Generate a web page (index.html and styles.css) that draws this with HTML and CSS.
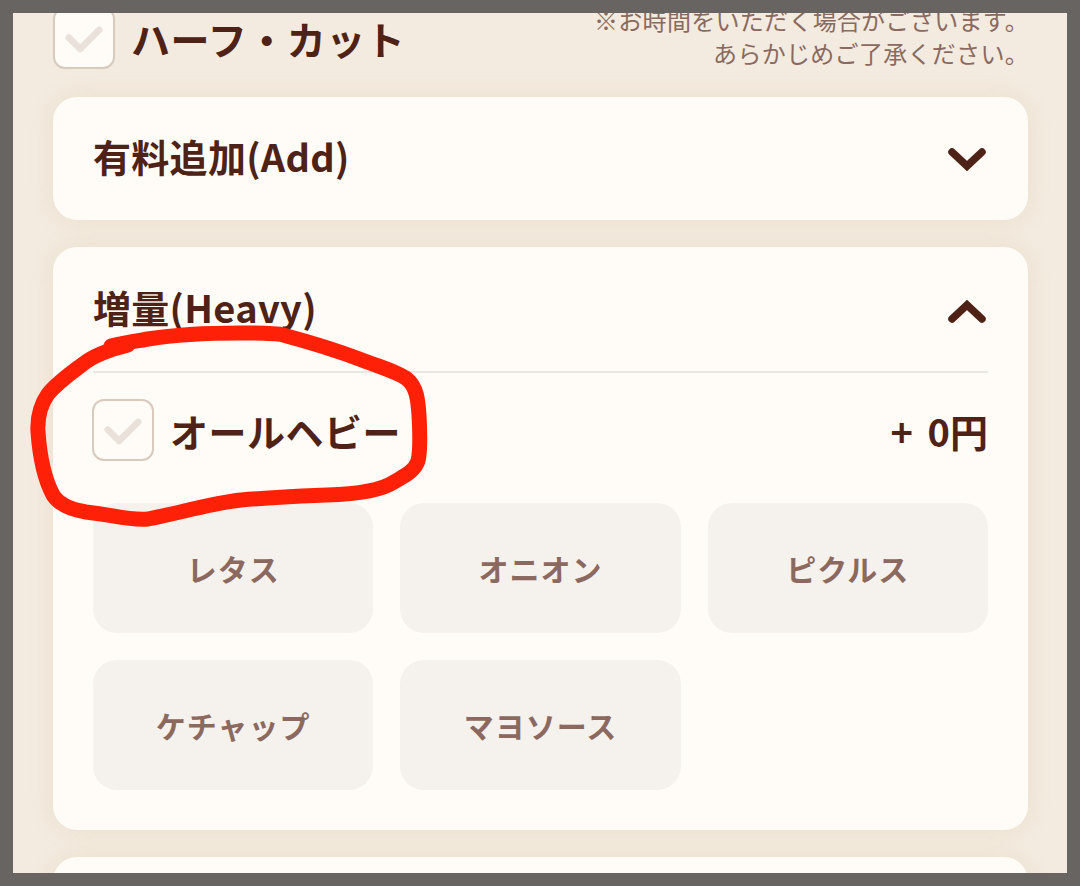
FILE: index.html
```html
<!DOCTYPE html>
<html lang="ja">
<head>
  <meta charset="UTF-8">
  <meta name="viewport" content="width=device-width, initial-scale=1.0">
  <title>トッピング</title>
  <link rel="stylesheet" href="styles.css">
</head>
<body>
  <div class="screen">
    <div class="page">

      <div class="top_row">
        <label class="check_line">
          <span class="checkbox">
            <svg viewBox="0 0 61 61"><path d="M14.5 30 L26.5 42 L46.5 22"/></svg>
          </span>
          <span class="check_label big">ハーフ・カット</span>
        </label>
        <p class="note">※お時間をいただく場合がございます。<br>あらかじめご了承ください。</p>
      </div>

      <section class="card">
        <div class="card_head">
          <h2>有料追加(Add)</h2>
          <svg class="chevron" viewBox="0 0 44 28"><path d="M7 7 L22 21 L37 7"/></svg>
        </div>
      </section>

      <section class="card open">
        <div class="card_head">
          <h2>増量(Heavy)</h2>
          <svg class="chevron" viewBox="0 0 44 28"><path d="M7 21 L22 7 L37 21"/></svg>
        </div>
        <div class="card_body">
          <div class="option_row">
            <label class="check_line">
              <span class="checkbox">
                <svg viewBox="0 0 61 61"><path d="M14.5 30 L26.5 42 L46.5 22"/></svg>
              </span>
              <span class="check_label">オールヘビー</span>
            </label>
            <span class="price">+ 0円</span>
          </div>
          <ul class="chips">
            <li>レタス</li>
            <li>オニオン</li>
            <li>ピクルス</li>
            <li>ケチャップ</li>
            <li>マヨソース</li>
          </ul>
        </div>
      </section>

      <section class="card">
        <div class="card_head">
          <h2>&nbsp;</h2>
        </div>
      </section>

    </div>

    <!-- hand drawn red mark -->
    <svg class="scribble" viewBox="0 0 1054 860">
      <path d="M98 333 C 110 330 124 328 135 326 C 160 322 200 320 228 320 C 250 320 262 320 270 322 C 300 330 320 336 349 347 C 370 355 385 359 394 366 C 404 374 405 388 406 402 C 407 420 407 440 405 448 C 401 459 391 463 381 469 C 369 477 346 481 314 482 C 290 483 262 484 228 487 C 200 490 170 499 135 506 C 118 508 100 502 73 499 C 55 496 45 490 40 482 C 32 467 27 447 25 419 C 24 402 28 391 35 381 C 45 369 58 360 70 351 C 80 343 95 337 115 332"/>
    </svg>
  </div>
</body>
</html>
```

FILE: styles.css
```css
* {
  margin: 0;
  padding: 0;
  box-sizing: border-box;
  list-style-type: none;
}

html {
  font-family: "Noto Sans CJK JP", "Noto Sans", sans-serif;
}

body {
  background-color: #686462;
  padding: 13px;
  height: 886px;
}

.screen {
  position: relative;
  height: 860px;
  overflow: hidden;
  background-color: #f3ebdf;
}

.page {
  display: flex;
  flex-direction: column;
  gap: 27px;
  padding: 0 39px 0 40px;
  margin-top: -6px;
}

/* top line (previous card, cut off) */
.top_row {
  display: flex;
  justify-content: space-between;
  align-items: center;
  height: 62px;
  margin-bottom: 1px;
}

.note {
  font-size: 24px;
  line-height: 33px;
  color: #8a6a60;
  text-align: right;
  margin-right: -1px;
  margin-top: -4px;
  letter-spacing: 0.3px;
}

.check_line {
  display: flex;
  align-items: center;
  gap: 16px;
}

.checkbox {
  display: block;
  width: 62px;
  height: 62px;
  border: 2px solid #d9cabe;
  border-radius: 12px;
  background-color: #fffbf6;
}

.checkbox svg {
  display: block;
  width: 58px;
  height: 58px;
}

.checkbox path {
  fill: none;
  stroke: #e9e1da;
  stroke-width: 7;
  stroke-linecap: round;
  stroke-linejoin: round;
}

.check_label {
  font-size: 38px;
  font-weight: 700;
  color: #4e2216;
  letter-spacing: 0.5px;
}

.check_label.big {
  font-size: 39px;
}

/* cards */
.card {
  background-color: #fffbf6;
  border-radius: 24px;
  box-shadow: 0 0 22px rgba(200, 170, 130, 0.18);
}

.card_head {
  display: flex;
  align-items: center;
  justify-content: space-between;
  height: 123px;
  padding: 0 40px;
}

.card_head h2 {
  font-size: 38px;
  font-weight: 700;
  color: #4e2216;
  letter-spacing: 0.3px;
  margin-top: -6px;
}

.chevron {
  display: block;
  width: 44px;
  height: 28px;
  margin-right: -1px;
}

.chevron path {
  fill: none;
  stroke: #4e2216;
  stroke-width: 7.5;
  stroke-linecap: round;
  stroke-linejoin: miter;
}

.card.open .card_head {
  height: 124px;
}

.card.open .chevron {
  margin-top: 6px;
}

.card_body {
  margin: 0 40px;
  border-top: 2px solid #ebe6e2;
  padding: 26px 0 40px;
}

.option_row {
  display: flex;
  justify-content: space-between;
  align-items: center;
  margin-left: -1px;
}

.price {
  font-size: 38px;
  font-weight: 700;
  color: #4e2216;
  word-spacing: 6px;
}

.chips {
  display: grid;
  grid-template-columns: repeat(3, 1fr);
  gap: 27px;
  margin-top: 42px;
}

.chips li {
  display: flex;
  align-items: center;
  justify-content: center;
  height: 130px;
  border-radius: 24px;
  background-color: #f5f1ed;
  font-size: 30px;
  font-weight: 700;
  color: #8c695e;
  letter-spacing: 1px;
}

.scribble {
  position: absolute;
  left: 0;
  top: 0;
  width: 1054px;
  height: 860px;
  pointer-events: none;
}

.scribble path {
  fill: none;
  stroke: #ff2008;
  stroke-width: 15;
  stroke-linecap: round;
  stroke-linejoin: round;
}
```
